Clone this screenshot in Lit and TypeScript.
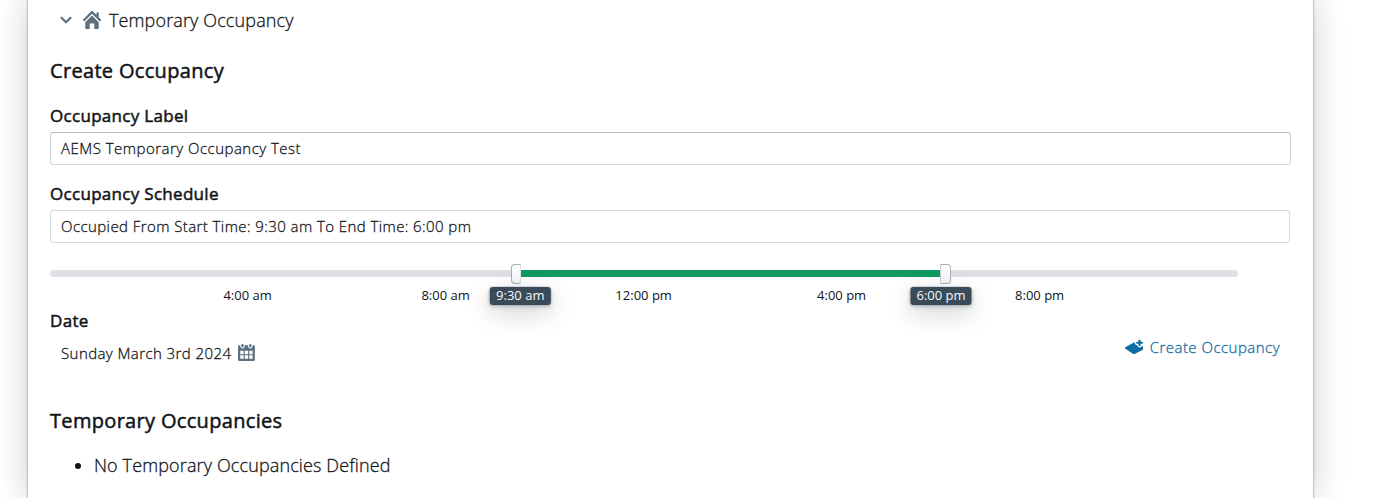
import { LitElement, html, css, svg } from "lit";
import { customElement, property } from "lit/decorators.js";

const icons: Record<string, unknown> = {
  chevron: svg`<path d="M12 5c-.28 0-.53.11-.71.29L8 8.59l-3.29-3.3a1.003 1.003 0 00-1.42 1.42l4 4c.18.18.43.29.71.29s.53-.11.71-.29l4-4A1.003 1.003 0 0012 5z"/>`,
  home: svg`<path d="M2 10v5c0 .55.45 1 1 1h3v-5h4v5h3c.55 0 1-.45 1-1v-5L8 4l-6 6zm13.71-2.71L14 5.59V2c0-.55-.45-1-1-1s-1 .45-1 1v1.59L8.71.29C8.53.11 8.28 0 8 0s-.53.11-.71.29l-7 7a1.003 1.003 0 001.42 1.42L8 2.41l6.29 6.29c.18.19.43.3.71.3a1.003 1.003 0 00.71-1.71z"/>`,
  calendar: svg`<path fill-rule="evenodd" d="M11 3c.6 0 1-.5 1-1V1c0-.6-.4-1-1-1s-1 .4-1 1v1c0 .5.4 1 1 1zm3-2h-1v1c0 1.100-.9 2-2 2s-2-.9-2-2V1H6v1c0 1.100-.9 2-2 2s-2-.9-2-2V1H1c-.6 0-1 .5-1 1v12c0 .6.4 1 1 1h13c.6 0 1-.4 1-1V2c0-.6-.5-1-1-1zM5 13H2v-3h3v3zm0-4H2V6h3v3zm4 4H6v-3h3v3zm0-4H6V6h3v3zm4 4h-3v-3h3v3zm0-4h-3V6h3v3zM4 3c.6 0 1-.5 1-1V1c0-.6-.4-1-1-1S3 .4 3 1v1c0 .5.4 1 1 1z"/>`,
  layer: svg`<path d="M10.700 5.200a.9.900 0 010-1.800H12V2.200a.9.900 0 011.800 0v1.200h1.300a.9.900 0 010 1.800h-1.300v1.200a.9.900 0 01-1.800 0V5.200z"/><path d="M8.700 3.900c0 1.400.9 2.500 2.200 2.600.2 1.100 1 1.900 2.200 1.900 1 0 1.800-.6 2.100-1.500l.3.200c.3.200.5.500.5.800v1.900c0 .4-.2.700-.5.900l-6.500 3.300c-.6.300-1.400.3-2 0L.6 9.800C.2 9.600 0 9.300 0 8.900c0-.4.200-.7.600-.9L8 4.100z"/>`,
};

@customElement("bp-icon")
class BpIcon extends LitElement {
  @property() name = "home";
  static styles = css`
    :host { display: block; width: 18px; height: 18px; flex: none; }
    svg { display: block; fill: currentColor; }
  `;
  render() {
    return html`<svg width="18" height="18" viewBox="0 0 16 16">${icons[this.name]}</svg>`;
  }
}

@customElement("time-range")
class TimeRange extends LitElement {
  @property({ type: Number }) start = 9.5;
  @property({ type: Number }) end = 18;
  static styles = css`
    :host { display: block; position: relative; width: 1188px; height: 39px; font-size: 13px; line-height: 14px; }
    .track { height: 7px; border-radius: 4px; background: #dce0e5; overflow: hidden; }
    .fill { height: 7px; background: #0f9960; }
    .label { position: absolute; top: 18px; transform: translateX(-50%); margin-left: -.4px; white-space: nowrap; }
    .tip { top: 17px; margin-left: 0; padding: 1px 6px 3px; border-radius: 3px; background: #394b59; color: #f5f8fa;
      box-shadow: 0 0 0 1px rgba(16,22,26,.1), 0 2px 4px rgba(16,22,26,.2), 0 8px 24px rgba(16,22,26,.2); }
    .handle { position: absolute; top: -6px; box-sizing: border-box; width: 10px; height: 20px; background: linear-gradient(#fff, #f4f5f7);
      border: 1px solid #a9aeb3; }
    .lo { border-radius: 4px 0 0 4px; margin-left: -9px; border-right-color: #dfe2e4; }
    .hi { border-radius: 0 4px 4px 0; margin-left: -1px; border-left-color: #c8ccd0; width: 11px; }
  `;
  private fmt(h: number) {
    const hour = Math.floor(h) % 12 || 12;
    return `${hour}:${h % 1 ? "30" : "00"} ${h < 12 ? "am" : "pm"}`;
  }
  render() {
    const at = (h: number) => `left:${(h / 24) * 100}%`;
    return html`
      <div class="track"><div class="fill" style="width:${((this.end - this.start) / 24) * 100}%;margin-left:${(this.start / 24) * 100}%"></div></div>
      ${[4, 8, 12, 16, 20].map((h) => html`<span class="label" style=${at(h)}>${this.fmt(h)}</span>`)}
      <span class="handle lo" style=${at(this.start)}></span>
      <span class="handle hi" style=${at(this.end)}></span>
      <span class="label tip" style=${at(this.start)}>${this.fmt(this.start)}</span>
      <span class="label tip" style=${at(this.end)}>${this.fmt(this.end)}</span>
    `;
  }
}

@customElement("app-root")
class AppRoot extends LitElement {
  static styles = css`
    :host { display: block; height: 498px; overflow: hidden; background: #fff; color: #111418;
      font-family: "Open Sans", sans-serif; font-size: 15px; }
    .card { box-sizing: border-box; width: 1285px; height: 498px; margin-left: 28px; padding: 7px 22px 0; background: #fff;
      box-shadow: 0 0 0 1px #bfc4c6, 0 0 3px rgba(16,22,26,.2), 0 0 30px 0 rgba(16,22,26,.22); }
    .node, ul, .input, .foot { font-weight: 300; -webkit-text-stroke: .28px currentColor; }
    .node, ul { font-size: 18px; letter-spacing: .13px; }
    .input, .foot { letter-spacing: .42px; }
    .node { display: flex; align-items: center; height: 26px; padding-left: 7px; }
    .node bp-icon { color: #5c7080; }
    .node .home { margin: 0 8px 0 8px; }
    h2, h3 { margin: 0; font-weight: 400; -webkit-text-stroke: .5px currentColor; }
    h2 { font-size: 20px; line-height: 28px; letter-spacing: .32px; }
    h3 { font-size: 17px; line-height: 24px; letter-spacing: .3px; }
    .first { margin-top: 24px; }
    .label { margin-top: 19px; }
    .schedule { margin-top: 17px; }
    .input { box-sizing: border-box; height: 33px; margin-top: 4px; padding: 0 10px; border: 1px solid #d6d9db; border-radius: 3px; line-height: 31px; }
    .edit { border-color: #b9bdbf #d0d3d5 #d6d9db; letter-spacing: .48px; }
    .box { width: 1240px; }
    .range { margin-top: 27px; }
    .foot { display: flex; justify-content: space-between; height: 74px; }
    .date { display: flex; align-items: center; height: 20px; margin-top: 10px; padding-left: 11px; }
    .date bp-icon { color: #5c7080; margin-left: 7px; }
    .create { display: flex; align-items: center; height: 20px; margin-top: 4px; padding-right: 11px; color: #106ba3; letter-spacing: .47px; }
    .create bp-icon { margin-right: 7px; }
    ul { margin: 17px 0 0; padding-left: 44px; line-height: 26px; }
  `;
  render() {
    return html`<main class="card">
      <div class="node"><bp-icon name="chevron"></bp-icon><bp-icon class="home" name="home"></bp-icon><span>Temporary Occupancy</span></div>
      <h2 class="first">Create Occupancy</h2>
      <h3 class="label">Occupancy Label</h3>
      <div class="input edit">AEMS Temporary Occupancy Test</div>
      <h3 class="schedule">Occupancy Schedule</h3>
      <div class="input box">Occupied From Start Time: 9:30 am To End Time: 6:00 pm</div>
      <time-range class="range"></time-range>
      <h3>Date</h3>
      <div class="foot">
        <div class="date">Sunday March 3rd 2024<bp-icon name="calendar"></bp-icon></div>
        <div class="create"><bp-icon name="layer"></bp-icon>Create Occupancy</div>
      </div>
      <h2>Temporary Occupancies</h2>
      <ul><li>No Temporary Occupancies Defined</li></ul>
    </main>`;
  }
}
